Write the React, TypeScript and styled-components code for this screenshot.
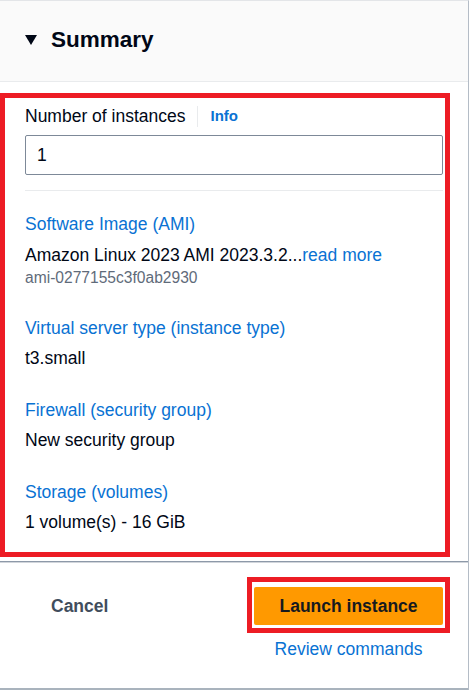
import styled, { createGlobalStyle } from 'styled-components';

const GlobalStyle = createGlobalStyle`
  body {
    margin: 0;
    background: #ffffff;
    font-family: "Liberation Sans", Arial, sans-serif;
    color: #000716;
  }
`;

const Panel = styled.div`
  width: 468px;
  border-top: 1px solid #e3e5e8;
  border-right: 1px solid #b4bcc6;
  background: #ffffff;
`;

const Header = styled.div`
  display: flex;
  align-items: flex-start;
  gap: 14px;
  height: 81px;
  box-sizing: border-box;
  padding: 24px 25px 0;
  background: #fafafa;
  border-bottom: 1px solid #e9ebed;
`;

const Caret = styled.svg`
  width: 12px;
  height: 10px;
  margin-top: 10px;
  flex: none;
`;

const Title = styled.h2`
  margin: 0;
  font-size: 22.5px;
  line-height: 30px;
  font-weight: 700;
  color: #000716;
`;

// red annotation frame around parts of the screenshot
const Highlight = styled.div<{ $pad: string }>`
  border: 5px solid #ed1c24;
  padding: ${p => p.$pad};
  box-sizing: border-box;
`;

const Body = styled(Highlight)`
  width: 450px;
  margin: 11px 0 4px;
`;

const LabelRow = styled.div`
  display: flex;
  align-items: center;
  height: 22px;
  font-size: 17.5px;
  line-height: 22px;
`;

const Separator = styled.span`
  width: 1px;
  height: 21px;
  background: #e9ebed;
  margin: 0 13px 0 11px;
`;

const InfoLink = styled.a`
  font-size: 15px;
  font-weight: 700;
  color: #0972d3;
  text-decoration: none;
`;

const CountInput = styled.input`
  display: block;
  width: 418px;
  height: 40px;
  box-sizing: border-box;
  margin-top: 8px;
  padding: 0 11px;
  border: 1px solid #7d8998;
  border-radius: 2px;
  font-family: inherit;
  font-size: 17.5px;
  color: #000716;
  background: #ffffff;
  outline: none;
`;

const Divider = styled.hr`
  width: 418px;
  margin: 15px 0 0;
  border: 0;
  border-top: 1px solid #e9ebed;
`;

const Sections = styled.div`
  display: flex;
  flex-direction: column;
  gap: 30px;
  margin-top: 22px;
`;

const Section = styled.div`
  display: flex;
  flex-direction: column;
`;

const SectionLabel = styled.a`
  font-size: 17.5px;
  line-height: 22px;
  color: #0972d3;
  text-decoration: none;
`;

const Value = styled.div<{ $gap: number }>`
  margin-top: ${p => p.$gap}px;
  font-size: 17.5px;
  line-height: 22px;
  color: #000716;
`;

const ReadMore = styled.a`
  color: #0972d3;
  text-decoration: none;
`;

const SubValue = styled.div`
  margin-top: 3px;
  font-size: 15.6px;
  line-height: 18px;
  color: #5f6b7a;
`;

const Footer = styled.div`
  display: flex;
  justify-content: space-between;
  align-items: flex-start;
  padding: 15px 18px 28px 25px;
  border-top: 1px solid #8d99a8;
  box-shadow: inset 0 1px 0 #d1d5db;
  border-bottom: 2px solid #a9b3bd;
`;

const CancelButton = styled.button`
  margin-top: 18px;
  padding: 0 26px;
  border: 0;
  background: none;
  font-family: inherit;
  font-size: 17.5px;
  line-height: 22px;
  font-weight: 700;
  color: #414d5c;
  cursor: pointer;
`;

const Actions = styled.div`
  display: flex;
  flex-direction: column;
  align-items: center;
`;

const LaunchButton = styled.button`
  display: block;
  width: 189px;
  height: 38px;
  border: 0;
  border-radius: 2px;
  background: #ff9900;
  font-family: inherit;
  font-size: 17.5px;
  font-weight: 700;
  color: #16191f;
  cursor: pointer;
`;

const ReviewLink = styled.a`
  margin-top: 5px;
  font-size: 17.5px;
  line-height: 22px;
  color: #0972d3;
  text-decoration: none;
`;

const summary = [
  { label: 'Software Image (AMI)', value: 'Amazon Linux 2023 AMI 2023.3.2...', more: true, sub: 'ami-0277155c3f0ab2930' },
  { label: 'Virtual server type (instance type)', value: 't3.small' },
  { label: 'Firewall (security group)', value: 'New security group' },
  { label: 'Storage (volumes)', value: '1 volume(s) - 16 GiB' },
];

export default function App() {
  return (
    <>
      <GlobalStyle/>
      <Panel>
        <Header>
          <Caret viewBox="0 0 12 10">
            <polygon points="0,0 12,0 6,10" fill="#000716"/>
          </Caret>
          <Title>Summary</Title>
        </Header>

        <Body $pad="7px 2px 19px 20px">
          <LabelRow>
            <span>Number of instances</span>
            <Separator/>
            <InfoLink href="#">Info</InfoLink>
          </LabelRow>
          <CountInput type="number" defaultValue={1}/>
          <Divider/>
          <Sections>
            {summary.map(s => (
              <Section key={s.label}>
                <SectionLabel href="#">{s.label}</SectionLabel>
                <Value $gap={s.more ? 9 : 8}>
                  {s.value}
                  {s.more && <ReadMore href="#">read more</ReadMore>}
                </Value>
                {s.sub && <SubValue>{s.sub}</SubValue>}
              </Section>
            ))}
          </Sections>
        </Body>

        <Footer>
          <CancelButton>Cancel</CancelButton>
          <Actions>
            <Highlight $pad="5px 2px 3px 2px">
              <LaunchButton>Launch instance</LaunchButton>
            </Highlight>
            <ReviewLink href="#">Review commands</ReviewLink>
          </Actions>
        </Footer>
      </Panel>
    </>
  );
}
